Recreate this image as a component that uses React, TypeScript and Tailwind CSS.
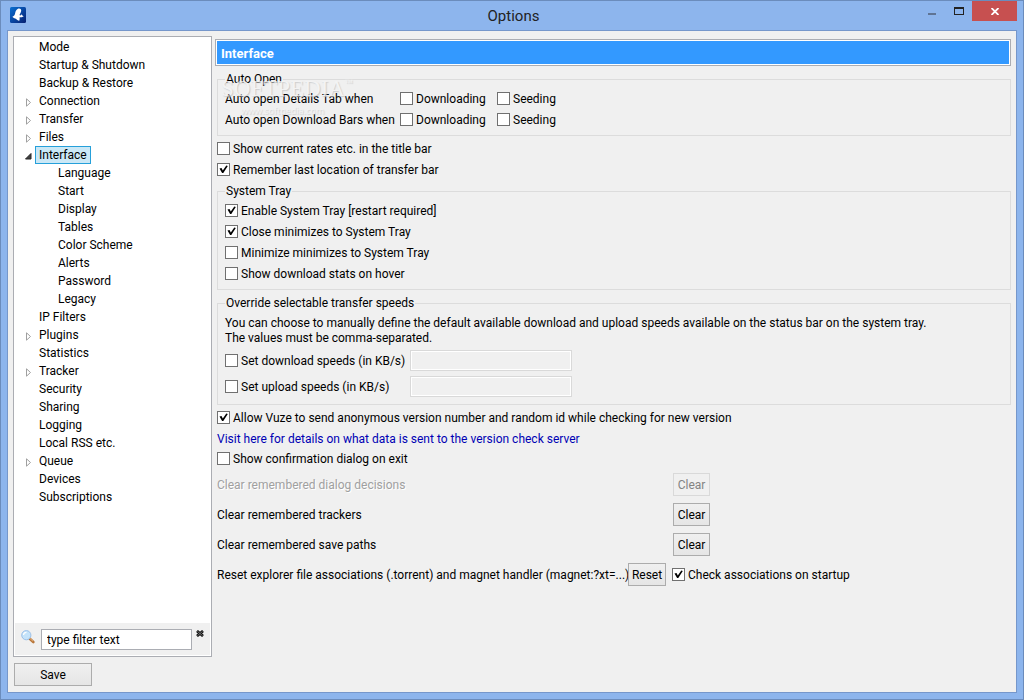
import React, { useState } from "react";

type TreeItem = {
  label: string;
  state?: "closed" | "open";
  children?: string[];
};

const treeItems: TreeItem[] = [
  { label: "Mode" },
  { label: "Startup & Shutdown" },
  { label: "Backup & Restore" },
  { label: "Connection", state: "closed" },
  { label: "Transfer", state: "closed" },
  { label: "Files", state: "closed" },
  {
    label: "Interface",
    state: "open",
    children: [
      "Language",
      "Start",
      "Display",
      "Tables",
      "Color Scheme",
      "Alerts",
      "Password",
      "Legacy",
    ],
  },
  { label: "IP Filters" },
  { label: "Plugins", state: "closed" },
  { label: "Statistics" },
  { label: "Tracker", state: "closed" },
  { label: "Security" },
  { label: "Sharing" },
  { label: "Logging" },
  { label: "Local RSS etc." },
  { label: "Queue", state: "closed" },
  { label: "Devices" },
  { label: "Subscriptions" },
];

const Checkbox: React.FC<{
  label: string;
  defaultChecked?: boolean;
  className?: string;
}> = ({ label, defaultChecked = false, className = "" }) => (
  <label className={`flex h-[21px] items-center gap-[3px] ${className}`}>
    <span className="grid shrink-0">
      <input
        type="checkbox"
        defaultChecked={defaultChecked}
        className="peer col-start-1 row-start-1 size-[13px] appearance-none border border-[#707070] bg-white"
      />
      <svg
        viewBox="0 0 13 13"
        className="pointer-events-none col-start-1 row-start-1 hidden size-[13px] peer-checked:block"
      >
        <path d="M2.5 5.5L4.5 5L5.8 7.4L9.3 2.6L10.8 3L6.3 10H5.1Z" fill="#000" />
      </svg>
    </span>
    <span className="whitespace-nowrap">{label}</span>
  </label>
);

const Group: React.FC<{
  title: string;
  className?: string;
  children: React.ReactNode;
}> = ({ title, className = "", children }) => (
  <fieldset className={`ml-0.5 border border-[#dcdcdc] px-[7px] ${className}`}>
    <legend className="h-4 px-px leading-4">{title}</legend>
    {children}
  </fieldset>
);

const PushButton: React.FC<{
  children: React.ReactNode;
  disabled?: boolean;
  className?: string;
}> = ({ children, disabled, className = "" }) => (
  <button
    disabled={disabled}
    className={`h-[23px] shrink-0 border border-[#acacac] bg-linear-to-b from-[#f0f0f0] to-[#e5e5e5] disabled:border-[#d9d9d9] disabled:bg-none disabled:text-[#838383] ${className}`}
  >
    {children}
  </button>
);

const SpeedRow: React.FC<{ label: string }> = ({ label }) => (
  <div className="flex items-center">
    <Checkbox label={label} className="w-[185px]" />
    <input
      type="text"
      disabled
      aria-label={label}
      className="h-[21px] w-[162px] border border-[#d9d9d9] bg-[#f0f0f0] px-1 inset-ring inset-ring-white"
    />
  </div>
);

const ClearRow: React.FC<{ label: string; disabled?: boolean }> = ({
  label,
  disabled,
}) => (
  <div className="flex items-center">
    <span
      className={`w-[456px] ${
        disabled ? "text-[#a0a0a0] [text-shadow:1px_1px_0_#fff]" : ""
      }`}
    >
      {label}
    </span>
    <PushButton disabled={disabled} className="w-[37px]">
      Clear
    </PushButton>
  </div>
);

const TitleBar = () => (
  <header className="grid h-[29px] grid-cols-[1fr_auto_1fr] pr-1.5 pl-[9px]">
    <svg viewBox="0 0 16 16" className="mt-1.5 size-4">
      <defs>
        <linearGradient id="logo" x1="0" y1="0" x2="1" y2="1">
          <stop offset="0" stopColor="#0a6fd0" />
          <stop offset="0.5" stopColor="#0847a4" />
          <stop offset="1" stopColor="#071f70" />
        </linearGradient>
      </defs>
      <rect width="16" height="16" rx="1.5" fill="url(#logo)" />
      <path
        d="M7.6 2C9.2 1 11.2 1.6 11.2 3.6C11.2 5.6 9.9 6.6 9.5 8C9.8 8.8 10.8 8.6 11.6 7.2C12 8.4 12.8 8.9 13.8 9.2C12.6 10.2 11 10.2 9.6 10.2C9.6 11.6 9.8 12.8 9.2 13.8C7.8 13.6 6.8 12.9 6 11.8C4.6 11.5 3.2 10.9 2.4 9.8C4.4 9 4.8 7.8 5.2 6C5.5 4.4 6.2 2.8 7.6 2Z"
        fill="#fff"
      />
    </svg>
    <h1 className="text-[15px] leading-[30px] text-[#222]">Options</h1>
    <div className="flex h-5 justify-end">
      <button aria-label="Minimize" className="flex w-[27px] justify-center">
        <span className="mt-3 h-0.5 w-2 bg-[#5f7494]" />
      </button>
      <button aria-label="Maximize" className="flex w-[27px] justify-center">
        <span className="mt-1.5 h-2 w-2.5 border border-t-2 border-[#222]" />
      </button>
      <button
        aria-label="Close"
        className="flex w-[45px] items-center justify-center bg-[#c75050]"
      >
        <svg viewBox="0 0 8 7" className="h-[7px] w-2">
          <path d="M0.5 0L7.5 7M7.5 0L0.5 7" stroke="#fff" strokeWidth="1.8" />
        </svg>
      </button>
    </div>
  </header>
);

const Sidebar: React.FC<{
  selected: string;
  onSelect: (label: string) => void;
}> = ({ selected, onSelect }) => (
  <aside className="flex grow flex-col border border-[#abadb3] bg-white p-px">
    <ul className="grow">
      {treeItems.map((item) => (
        <li key={item.label}>
          <div className="flex h-[18px] items-center pl-2.5">
            <svg viewBox="0 0 8 9" className="mt-0.5 mr-0.5 h-[9px] w-2">
              {item.state === "closed" && (
                <path d="M1.5 0.8V8.2L5.5 4.5Z" fill="#fff" stroke="#a0a0a0" />
              )}
              {item.state === "open" && (
                <path d="M6 1.5V7H0.5Z" fill="#404040" stroke="#262626" />
              )}
            </svg>
            <button
              onClick={() => onSelect(item.label)}
              className={`h-[18px] border px-[3px] leading-4 ${
                selected === item.label
                  ? "border-[#26a0da] bg-[#cbe8f6]"
                  : "border-transparent"
              }`}
            >
              {item.label}
            </button>
          </div>
          {item.children && (
            <ul className="pl-[39px]">
              {item.children.map((child) => (
                <li key={child} className="flex h-[18px]">
                  <button
                    onClick={() => onSelect(child)}
                    className={`border px-[3px] leading-4 ${
                      selected === child
                        ? "border-[#26a0da] bg-[#cbe8f6]"
                        : "border-transparent"
                    }`}
                  >
                    {child}
                  </button>
                </li>
              ))}
            </ul>
          )}
        </li>
      ))}
    </ul>
    <div className="flex h-8 bg-[#f0f0f0] pt-1.5 pl-1.5">
      <svg viewBox="0 0 14 14" className="mt-px mr-1.5 size-3.5">
        <path d="M8.5 8.5L12.3 12" stroke="#b8763a" strokeWidth="2.6" strokeLinecap="round" />
        <path d="M8.8 8.3L12 11.2" stroke="#e6b27c" strokeWidth="1" />
        <circle cx="5.3" cy="5.2" r="4.6" fill="#c5e3fa" stroke="#9cc0e8" />
        <path d="M2.5 5A3 3 0 0 1 5.5 2.3" stroke="#fff" strokeWidth="1.2" fill="none" />
      </svg>
      <input
        type="text"
        aria-label="Filter"
        defaultValue="type filter text"
        className="h-[21px] w-[151px] border border-[#abadb3] bg-white px-[5px]"
      />
      <button aria-label="Clear filter" className="mt-px ml-1 flex h-2">
        <svg viewBox="0 0 8 7" className="h-[7px] w-2">
          <path d="M1 1L7 6M7 1L1 6" stroke="#111" strokeWidth="2.8" />
          <path d="M1.5 1.5L6.5 5.5M6.5 1.5L1.5 5.5" stroke="#777" strokeWidth="0.9" />
        </svg>
      </button>
    </div>
  </aside>
);

const Watermark = () => (
  <div className="pointer-events-none absolute top-1.5 left-1.5 font-['Liberation_Serif',serif] text-[#f4f4f4] opacity-80 [text-shadow:1px_1px_1px_#c4c4c4]">
    <div className="flex items-start text-[23px] leading-6">
      SOFTPEDIA<span className="text-[8px] leading-3">™</span>
    </div>
    <div className="pl-5 font-['Open_Sans',sans-serif] text-[9px] leading-5">
      www.softpedia.com
    </div>
  </div>
);

const InterfacePanel = () => (
  <main className="min-w-0 grow pt-2 pr-[5px]">
    <div className="border border-[#abadb3] bg-white p-px">
      <h2 className="h-[23px] bg-[#3399ff] px-1 text-[13px] leading-[25px] font-bold text-white">
        Interface
      </h2>
    </div>

    <div className="relative mt-[5px]">
      <Group title="Auto Open" className="pt-px pb-[5px]">
        {["Auto open Details Tab when", "Auto open Download Bars when"].map(
          (label) => (
            <div key={label} className="flex h-[21px] items-center">
              <span className="w-[175px] whitespace-nowrap">{label}</span>
              <Checkbox label="Downloading" className="w-[97px]" />
              <Checkbox label="Seeding" />
            </div>
          )
        )}
      </Group>
      <Watermark />
    </div>

    <div className="mt-0.5 ml-0.5">
      <Checkbox label="Show current rates etc. in the title bar" />
      <Checkbox label="Remember last location of transfer bar" defaultChecked />
    </div>

    <Group title="System Tray" className="mt-[3px] pt-px pb-[5px]">
      <Checkbox label="Enable System Tray [restart required]" defaultChecked />
      <Checkbox label="Close minimizes to System Tray" defaultChecked />
      <Checkbox label="Minimize minimizes to System Tray" />
      <Checkbox label="Show download stats on hover" />
    </Group>

    <Group
      title="Override selectable transfer speeds"
      className="mt-[5px] pt-[5px] pb-[7px]"
    >
      <p className="leading-[15px]">
        You can choose to manually define the default available download and
        upload speeds available on the status bar on the system tray.
        <br />
        The values must be comma-separated.
      </p>
      <div className="mt-1 flex flex-col gap-[5px]">
        <SpeedRow label="Set download speeds (in KB/s)" />
        <SpeedRow label="Set upload speeds (in KB/s)" />
      </div>
    </Group>

    <div className="mt-0.5 ml-0.5">
      <Checkbox
        label="Allow Vuze to send anonymous version number and random id while checking for new version"
        defaultChecked
      />
      <a href="#version" className="block h-5 leading-[22px] text-[#0000b4]">
        Visit here for details on what data is sent to the version check server
      </a>
      <Checkbox label="Show confirmation dialog on exit" />
    </div>

    <div className="mt-1 ml-0.5 flex flex-col gap-[7px]">
      <ClearRow label="Clear remembered dialog decisions" disabled />
      <ClearRow label="Clear remembered trackers" />
      <ClearRow label="Clear remembered save paths" />
      <div className="flex items-center">
        <span className="w-[411px] whitespace-nowrap">
          Reset explorer file associations (.torrent) and magnet handler
          (magnet:?xt=...)
        </span>
        <PushButton className="mr-1.5 w-[38px]">Reset</PushButton>
        <Checkbox label="Check associations on startup" defaultChecked />
      </div>
    </div>
  </main>
);

const App: React.FC = () => {
  const [selected, setSelected] = useState("Interface");

  return (
    <div className="flex min-h-screen flex-col border border-[#6b8cbc] bg-[#8db5ed] font-[Roboto,'Noto_Sans',sans-serif] text-[12px] leading-4 text-black">
      <TitleBar />
      <div className="mx-1.5 mb-1.5 flex grow border border-[#7697cb] bg-[#f0f0f0]">
        <div className="mr-[3px] flex w-[204px] shrink-0 flex-col pt-[5px] pb-1.5 pl-[5px]">
          <Sidebar selected={selected} onSelect={setSelected} />
          <PushButton className="mt-1.5 ml-px w-[78px]">Save</PushButton>
        </div>
        <InterfacePanel />
      </div>
    </div>
  );
};

export default App;
